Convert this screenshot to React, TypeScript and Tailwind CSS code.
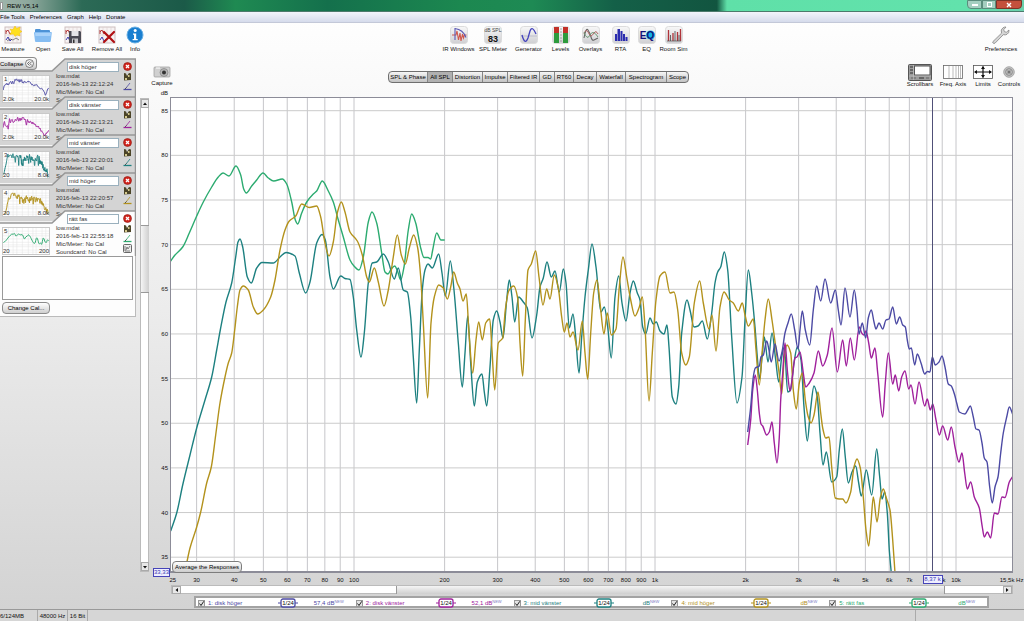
import type { ReactNode } from "react"

type Trace = {
  id: number
  name: string
  date: string
  color: string
  textClass: string
  value: string
  from: string
  to: string
  thumb: string
  points: string
}

const traces: Trace[] = [
  {
    id: 1,
    name: "disk höger",
    date: "2016-feb-13 22:12:24",
    color: "#4c4aa4",
    textClass: "text-[#4c4aa4]",
    value: "57,4 dB",
    from: "2.0k",
    to: "20.0k",
    thumb: "747 240 266 355",
    points:
      "747.7,432 750.7,407 753.3,377 755.3,368 759.3,366 761,357 763.3,355 766.7,341 769,350 771.3,362 775,344 779,361 782,352 785,333 788,323 791.3,314 794.7,330 798,349 800,330 802.3,311 805.3,330 809.7,345 813.3,310 816.7,286 820.7,301 825,279 830.7,303 835.3,290 838.3,310 841,325 845,288 850,317 854.3,290 857,310 859,334 862.3,323 865.7,338 868.3,318 871.3,310 874,322 876,329 879,323 882.7,329 886,320 889,319 892.7,307 896.3,324 899.7,317 902.7,325 905.3,327 907.3,340 909.3,349 911.3,348 914.7,365 917.3,354 921,363 924.7,374 927.3,371.5 930,372 932.3,357 935.3,365 939,362 942,356 945,367 948.3,384 951.3,386 954.7,395 956.7,403 959.3,412 965,414 967.7,410 970.3,406 973.3,417 976,429 979,430 982,443 984.3,458 987,462 989.7,487 992.3,503 995,487 998,477 1000.7,453 1003.3,433 1006.7,417 1009.3,407 1013,415",
  },
  {
    id: 2,
    name: "disk vänster",
    date: "2016-feb-13 22:13:21",
    color: "#a0209c",
    textClass: "text-[#a0209c]",
    value: "52,1 dB",
    from: "2.0k",
    to: "20.0k",
    thumb: "747 290 266 297",
    points:
      "747.7,445 750.7,420 752.7,390 755.3,375 757.3,390 759.3,413 761,424 762.7,426 766.7,435 769.3,432 772,422 774.3,443 777,463 779.3,437 780.7,400 782.7,373 785,343 787.5,372 790,391 792,380 795,358 797,357 800,352 803.3,373 805.7,387 809.3,383 814,373 818.3,351 822.7,366 827.3,355 832,328 837.3,372 842.7,340 846.3,366 850.3,338 854.3,360 859.3,327 861.7,333 864,335 866,331 868.7,343 871.3,358 875,348 877.7,373 882.7,417 885.3,383 888.3,353 892.7,384 895.3,375 898.7,391 901.7,377 905,371 908.7,389 911,385 915,404 919,382 924.7,406 927.3,399 930.3,410 932.7,404 936,420 939.3,435 942.7,426 947.7,440 951.3,427 955,447 959,462 962,453 964.7,473 967.3,489 970.7,482 974.3,497 979.3,508 982.3,527 984.3,537 987.3,532 990.7,538 994.3,513 998,514 1002,497 1005,497.5 1009.3,482 1013,476",
  },
  {
    id: 3,
    name: "mid vänster",
    date: "2016-feb-13 22:20:01",
    color: "#1d8080",
    textClass: "text-[#1d8080]",
    value: "dB",
    from: "20",
    to: "8.0k",
    thumb: "160 210 750 370",
    points:
      "170.7,531 176.7,513 182.7,485 190,455 196.7,428 205,400 211.7,377 216.7,350 220.3,330 226,302 231.7,283 235.7,257 238,242 240,239 242.7,247 247.3,277 251.3,283 256.7,268 262,262.5 273.3,263 280,257 286,252.5 295,256 299.3,273 305.7,293 310,282 316.7,243 322,234.5 325.3,240 330,277 333.3,289 340.7,276 345,278.5 350,279.5 353.3,297 356.7,330 361,357 364.3,333 368.3,283 372.3,263 376.7,262 383.3,254 388.3,262 394.3,279 398.3,268 403.3,290 407.3,292 410.7,317 413.3,357 416.7,403 419.3,350 422.3,290 425,270 428,264 432.3,268 438.7,254 442,273 445.3,296 450.3,261 454,290 458.3,343 462.3,387 465,353 467.7,316 470.7,363 474.3,406 477.3,382 482,374 484.3,392 486.7,406 490,367 493.3,320 496.7,311 500,322 503,338 506.7,300 509.3,280 512,297 514.7,322 518.7,297 523.3,302 527.3,308 532,338 536.7,315 540,287 543.3,278 547,262 551.3,277 555,271 559.3,292 563.3,269 566,283 569.3,328 573,314 575.7,337 579,373 581.7,337 585,297 588.3,270 592,244 596,267 601,312 604.3,307 607.7,327 611.3,358 615,297 618.7,276 622,303 626,321 630,293 633.3,281 637.3,293 640,300 642.7,327 645.7,334 650,318 653.3,324 656.3,322 660,331 664,334 667,325 669,347 672.3,397 676,404 678.7,387 681.7,333 687,300 690,310 694,327 698,326 702.3,321 707.3,339 711.7,313 715,283 717.7,272 720.7,267 724.3,252 727.7,270 731.7,337 737,403 742,377 745,320 748.3,270 751.7,293 755,327 757.3,357 759.5,379 762,358 764.3,337 768,362 772,333 775.7,360 778.7,382 781.7,357 784.3,347 787.7,392 790.5,390 794,363 797.3,347 801,360 804,407 807.3,441 810.5,410 814,386 817.3,397 820,433 823,465 826.3,452 831.7,482 836.7,477 839.3,450 842.3,429 845.3,457 848.3,483 852,472 855.7,466 858.7,483 861.3,496 866.3,470 871.7,495 876.7,449 879.7,477 882,499 884.7,492 887.3,513 889.3,550 891.3,573",
  },
  {
    id: 4,
    name: "mid höger",
    date: "2016-feb-13 22:20:57",
    color: "#b3921c",
    textClass: "text-[#b3921c]",
    value: "dB",
    from: "20",
    to: "8.0k",
    thumb: "150 150 760 460",
    points:
      "184.7,573 190,548 196.7,527 200.7,512 206.7,483 211.3,467 215.7,435 220,403 225,377 228.3,363 231.7,353 234.7,330 237.3,307 240,290 243.3,286 248.3,290 253.3,307 257.7,314 263.3,310 270.7,297 275,280 280,250 285,230 289.3,221 295.7,216 301.7,204 309.3,207.5 316.7,206 320.7,217 325,243 329,256 333.3,242 337.3,213 341.3,202 345,212 350,232 357.3,241 362.3,255 366.7,277 369.3,282 374.3,268 378.3,282 384,306 388.3,290 393.3,257 397.3,235 401.3,255 405.3,264 409.3,248 413.7,235 417.7,248 420.7,277 423.3,323 427.7,398 431,323 434.3,297 438.7,285 443.3,288 447.3,299 450.7,287 453.7,272 457.3,283 460,289 463,301 466.3,294 469,333 472.7,373 476,340 478.7,322 482.3,340 485.7,323 489.7,319 492,350 494.7,390 498.3,343 502.7,338 505.3,310 508.7,291 513.7,286 517.7,298 520,343 522.7,376 525.3,320 528,270 531.3,264 535.7,251 539,277 543,305 546.7,289 550,299 554.3,275 558.3,288 561.7,317 564.3,332 567,323 570,337 573,332 578,350 582.3,321 585,353 587.7,379 590.7,333 593.7,293 597,280 600,303 604,334 607.3,313 611.3,335 616,329 619.3,287 623,257 626.7,277 630.7,300 635,316 639.3,307 642.3,297 645,327 649,401 652.3,353 656,300 660,276 665,272 670,293 674,292 677.7,310 681.7,353 685.7,365 689.3,357 694.3,303 699.7,281 703.3,303 709,329 712,315 716,351 720,307 724,292 729.3,300 733.3,303 738.3,311 742.3,303 745,315 748.3,326 753.3,319 756,350 759.3,385 762.3,350 765,320 768.3,299 772,320 775.7,347 779,372 781.7,394 784.3,357 787,345 790.7,353 793.3,390 796.3,409 799.3,383 802.3,373 805.3,400 808,416 811,423 814,415 818,392 820.7,413 822.7,428 825.7,438 829,437 831.7,467 835.3,498 839.3,499 842.7,499 846,503 850.7,492 854,467 857,459 860.3,468 863.3,497 866,530 868.7,546 871,523 873.3,497 877,522 880.3,498 883.3,489 886,497 890,510 892.7,540 895,573",
  },
  {
    id: 5,
    name: "rätt fas",
    date: "2016-feb-13 22:55:18",
    color: "#2cab70",
    textClass: "text-[#2cab70]",
    value: "dB",
    from: "20",
    to: "200",
    thumb: "168 110 278 270",
    points:
      "170.7,261 175,255 182.7,247 189.3,233 196.7,216 203.3,202 211.7,187 218.3,177 223,173 229,176 236,166 240.7,175 243.7,189 246.3,193 251.7,186 256.7,180 263,173 268.3,178 273.7,181 282.3,179 286.7,184 291.7,202 295.3,220 297.7,224 301.7,213 306.7,202 313.3,194 316.7,191 322.3,181 328.3,191 333.3,202 338.3,220 343.3,237 350,260 354,266 359,270 363.3,257 368.3,222 372,212 376.7,223 381.7,253 385,272 388,274 390.7,270 394.7,266 397.5,271 400.7,280 404,267 408.3,230 411.7,214 415.7,223 420.7,248 424,257.5 428,257.5 430.7,259 432.7,250 436.7,233 441,240 444.7,240",
  },
]

// plot area in drawing units
const PLOT = { left: 170, top: 97, width: 843, height: 476 }

const freqX = (f: number) => 354 + 301 * Math.log10(f / 100)
const dbY = (db: number) => 110.7 + (85 - db) * 8.93

const gridFreqs = [
  30, 40, 50, 60, 70, 80, 90, 100, 200, 300, 400, 500, 600, 700, 800, 900, 1000, 2000, 3000, 4000, 5000, 6000, 7000,
  8000, 9000, 10000,
]
const gridDbs = [85, 80, 75, 70, 65, 60, 55, 50, 45, 40, 35]

const freqLabels: [number, string][] = [
  [25, "25"], [30, "30"], [40, "40"], [50, "50"], [60, "60"], [70, "70"], [80, "80"], [90, "90"], [100, "100"],
  [200, "200"], [300, "300"], [400, "400"], [500, "500"], [600, "600"], [700, "700"], [800, "800"], [900, "900"],
  [1000, "1k"], [2000, "2k"], [3000, "3k"], [4000, "4k"], [5000, "5k"], [6000, "6k"], [7000, "7k"], [9000, "9k"],
  [10000, "10k"], [15300, "15,5k Hz"],
]

const leftPct = (x: number) => `${((x - PLOT.left) / PLOT.width) * 100}%`
const topPct = (y: number) => `${((y - PLOT.top) / PLOT.height) * 100}%`

// monotone cubic through the points, flat at every peak and dip
function smoothPath(points: string) {
  const p = points.split(" ").map((s) => s.split(",").map(Number))
  const slope = p.slice(1).map((q, i) => (q[1] - p[i][1]) / (q[0] - p[i][0]))
  const tangent = p.map((_, i) => {
    if (i === 0) return slope[0]
    if (i === p.length - 1) return slope[i - 1]
    const a = slope[i - 1]
    const b = slope[i]
    return a * b <= 0 ? 0 : (2 * a * b) / (a + b)
  })
  let d = `M${p[0][0]} ${p[0][1]}`
  for (let i = 1; i < p.length; i++) {
    const h = (p[i][0] - p[i - 1][0]) / 3
    d += `C${p[i - 1][0] + h} ${p[i - 1][1] + tangent[i - 1] * h} ${p[i][0] - h} ${p[i][1] - tangent[i] * h} ${p[i][0]} ${p[i][1]}`
  }
  return d
}

function Tile({ children }: { children?: ReactNode }) {
  return (
    <svg viewBox="0 0 18 18" className="size-[18px]" aria-hidden="true">
      <defs>
        <linearGradient id="tile" x1="0" y1="0" x2="0" y2="1">
          <stop offset="0" stopColor="#f8f8f8" />
          <stop offset="1" stopColor="#cfcfd2" />
        </linearGradient>
      </defs>
      <rect x="0.5" y="0.5" width="17" height="17" rx="3" fill="url(#tile)" stroke="#dcdcdc" />
      {children}
    </svg>
  )
}

function GraphSheet({ children }: { children?: ReactNode }) {
  return (
    <svg viewBox="0 0 18 18" className="size-[18px]" aria-hidden="true">
      <rect x="1" y="1" width="16" height="16" fill="#f7f3f3" stroke="#cdbfc0" />
      <path d="M1 9h16M9 1v16M5 1v16M13 1v16" stroke="#ddd2d2" strokeWidth="0.6" />
      <path d="M2 4v4M2 6l2-2 2 4 1-1" stroke="#b53a3a" fill="none" />
      <path d="M2 14l2-3 2 4 2-2" stroke="#3d3db0" fill="none" />
      {children}
    </svg>
  )
}

const icons: Record<string, ReactNode> = {
  Measure: (
    <GraphSheet>
      <path d="M3 15l3-2 3 1 3-2 3 2" stroke="#555" strokeWidth="0.7" fill="none" />
      <path d="M11 0l1.500 2.500L16 1l-.5 3 2.500 1.500-2.500 1.500L16 10l-3-1-2 1.500L9.500 8 6 8.500 7.500 5.500 6 3l3 .5z" fill="#ffe01e" stroke="#f0b810" strokeWidth="0.5" />
    </GraphSheet>
  ),
  Open: (
    <svg viewBox="0 0 18 18" className="size-[18px]" aria-hidden="true">
      <path d="M1 4q0-1 1-1h4l1 1h8q1 0 1 1v9H1z" fill="#4d92d6" />
      <path d="M0 7q0-1 1-1h16q1 0 .8 1l-1 8q0 1-1 1H2q-1 0-1-1z" fill="#86bdf2" />
      <path d="M1 7h16l-.5 3H1.500z" fill="#a9d2fa" />
    </svg>
  ),
  "Save All": (
    <GraphSheet>
      <path d="M5 5h11l1 1v11H5z" fill="#4b4b55" />
      <path d="M7.500 5h7v5h-7z" fill="#e6e6ea" />
      <path d="M8 12.500h6V17H8z" fill="#c8c8cd" />
      <path d="M9 13.500h1.500V17H9z" fill="#333" />
    </GraphSheet>
  ),
  "Remove All": (
    <GraphSheet>
      <path d="M6 6l10 10M16 6L6 16" stroke="#b00f12" strokeWidth="2.200" strokeLinecap="round" />
    </GraphSheet>
  ),
  Info: (
    <svg viewBox="0 0 18 18" className="size-[18px] max-w-none" aria-hidden="true">
      <circle cx="9" cy="9" r="8" fill="#1a7fd0" stroke="#69afe4" />
      <circle cx="9.200" cy="4.600" r="1.500" fill="#fff" />
      <path d="M7 7.500h3.200v5.500h1.500v1.300H6.600V13H8V8.800H7z" fill="#fff" />
    </svg>
  ),
  // impulse burst under a falling window curve
  "IR Windows": (
    <Tile>
      <path d="M2 9h4l1-4 1.500 9L10 7l1 8 1.500-7 1 4 1-3h2" stroke="#d0584e" strokeWidth="1.100" fill="none" />
      <path d="M5 14V2.500q8 1 11 9" stroke="#5958b5" strokeWidth="1.100" fill="none" />
    </Tile>
  ),
  "SPL Meter": (
    <Tile>
      <text x="9" y="6" textAnchor="middle" fontSize="5" fill="#444">dB SPL</text>
      <text x="9" y="15.500" textAnchor="middle" fontSize="9" fontWeight="bold" fill="#111">83</text>
    </Tile>
  ),
  Generator: (
    <Tile>
      <path d="M1 10h16" stroke="#9a9ab5" strokeWidth="0.5" />
      <path d="M2 9q3 11 6 3l2-7q2-6 6 3" stroke="#4342bd" strokeWidth="1.300" fill="none" />
    </Tile>
  ),
  Levels: (
    <Tile>
      <path d="M2 1h5v6H2zM11 1h5v6h-5z" fill="#c23028" />
      <path d="M2 7h5v10H2zM11 7h5v10h-5z" fill="#2d9b3d" />
      <path d="M8 3h2M8 6h2M8 9h2M8 12h2M8 15h2" stroke="#888" strokeWidth="0.7" />
    </Tile>
  ),
  Overlays: (
    <Tile>
      <path d="M2 12q2-11 4-8t3 7 3 3 4-2" stroke="#666" strokeWidth="1.100" fill="none" />
      <path d="M2 8q2-6 4-2t3 4 3-3 4 1" stroke="#b06262" strokeWidth="1" fill="none" />
      <path d="M2 6q3 9 6 3t8 2" stroke="#62926c" strokeWidth="0.9" fill="none" />
    </Tile>
  ),
  RTA: (
    <Tile>
      <path d="M3 15V8h2v7zM5.500 15V3h2.500v12zM8.500 15V5h2v10zM11 15V8h2v7zM13.500 15v-4h2v4z" fill="#2b2cae" />
    </Tile>
  ),
  EQ: (
    <Tile>
      <circle cx="12.500" cy="9" r="4.500" fill="#14b4e4" />
      <text x="9" y="12.500" textAnchor="middle" fontSize="10" fontWeight="bold" fill="#12127a">EQ</text>
    </Tile>
  ),
  "Room Sim": (
    <Tile>
      <path d="M3.500 15V4M8 15V7M12.500 15V6M15.500 15V3" stroke="#b0343a" strokeWidth="1.300" />
      <path d="M5.500 15V9M10 15V5M14 15V9" stroke="#666" strokeWidth="1" />
      <path d="M2 15h14" stroke="#555" strokeWidth="0.7" />
    </Tile>
  ),
  Preferences: (
    <svg viewBox="0 0 18 18" className="size-[18px]" aria-hidden="true">
      <path d="M1 15.500l8.500-8.300Q8.300 3.500 11 1.800q1.500-1 3-.8l-2.300 2.700.7 2 2 .5L17 4q.3 3-2 4.300-1.700 1-3.700.4L3 17.200q-1.200.5-2-.2t0-1.500z" fill="#d6d6d6" stroke="#858585" strokeWidth="0.8" />
    </svg>
  ),
  Capture: (
    <svg viewBox="0 0 18 12" className="h-3 w-[18px]" aria-hidden="true">
      <rect x="1" y="1" width="16" height="10" rx="1" fill="#d0d0d0" stroke="#999" strokeWidth="0.7" />
      <path d="M3 2h4" stroke="#fff" />
      <circle cx="11" cy="6.500" r="4" fill="#b5b5b5" stroke="#777" strokeWidth="0.6" />
      <circle cx="11" cy="6.500" r="2" fill="#333" />
    </svg>
  ),
  Scrollbars: (
    <svg viewBox="0 0 24 17" className="h-[17px] w-6" aria-hidden="true">
      <rect x="0.500" y="0.500" width="23" height="16" rx="1" fill="#9c9c9c" stroke="#555" />
      <rect x="6.500" y="2" width="15.500" height="9" fill="#fff" stroke="#555" />
      <path d="M2 3h3M2 6h3M2 9h3M11 14h5" stroke="#333" strokeWidth="1.200" />
      <path d="M3 14h5M18 14h3" stroke="#666" />
      <path d="M5.500 1v15M1 12h22" stroke="#ccc" strokeWidth="0.500" />
    </svg>
  ),
  "Freq. Axis": (
    <svg viewBox="0 0 20 14" className="h-[14px] w-5" aria-hidden="true">
      <rect x="0.500" y="0.500" width="19" height="13" fill="#fff" stroke="#666" strokeWidth="0.800" />
      <path d="M6 1v12M10 1v12M13 1v12M15.500 1v12M17.500 1v12" stroke="#aaa" strokeWidth="0.800" />
    </svg>
  ),
  Limits: (
    <svg viewBox="0 0 20 14" className="h-[14px] w-5" aria-hidden="true">
      <rect x="0.500" y="0.500" width="19" height="13" fill="#fff" stroke="#555" strokeWidth="0.800" />
      <path d="M2 7h16M10 1.500v11" stroke="#111" strokeWidth="1.200" />
      <path d="M1 7l3-2v4zM19 7l-3-2v4zM10 1L8 4h4zM10 13l-2-3h4z" fill="#111" />
    </svg>
  ),
  Controls: (
    <svg viewBox="0 0 12 14" className="h-[14px] w-3" aria-hidden="true">
      <circle cx="6" cy="7" r="5.300" fill="#c4c4c4" stroke="#9a9a9a" strokeWidth="0.800" />
      <circle cx="6" cy="7" r="3.500" fill="#a9a9a9" stroke="#8a8a8a" strokeWidth="0.700" />
      <path d="M6 4v6M3 7h6" stroke="#ddd" strokeWidth="0.600" />
      <circle cx="6" cy="7" r="1.500" fill="#777" />
    </svg>
  ),
}

function ToolButton({ label, width }: { label: string; width: string }) {
  return (
    <button className={`flex flex-col items-center justify-end gap-px ${width}`}>
      {icons[label]}
      <span className="leading-[9px] whitespace-nowrap">{label}</span>
    </button>
  )
}

const fileTools = [
  ["Measure", "w-[26px]"],
  ["Open", "w-[34px]"],
  ["Save All", "w-[25px]"],
  ["Remove All", "w-[44px]"],
  ["Info", "w-3"],
]

const measureTools = [
  ["IR Windows", "w-[34px]"],
  ["SPL Meter", "w-[35px]"],
  ["Generator", "w-[36px]"],
  ["Levels", "w-[28px]"],
  ["Overlays", "w-[32px]"],
  ["RTA", "w-[28px]"],
  ["EQ", "w-[24px]"],
  ["Room Sim", "w-[30px]"],
]

const graphTools = [
  ["Scrollbars", "w-[32px]"],
  ["Freq. Axis", "w-[34px]"],
  ["Limits", "w-[26px]"],
  ["Controls", "w-[26px]"],
]

const tabs = [
  ["SPL & Phase", "w-[39px]"],
  ["All SPL", "w-[25px]"],
  ["Distortion", "w-[30px]"],
  ["Impulse", "w-[25px]"],
  ["Filtered IR", "w-[32px]"],
  ["GD", "w-[15px]"],
  ["RT60", "w-[19px]"],
  ["Decay", "w-[23px]"],
  ["Waterfall", "w-[29px]"],
  ["Spectrogram", "w-[41px]"],
  ["Scope", "w-[21px]"],
]

function TitleBar() {
  return (
    <header className="flex h-3 shrink-0 items-center justify-between border-b border-[#4d7a6c] bg-[linear-gradient(90deg,#9fb5ab_0%,#8ca79b_3%,#2c6a56_8%,#1b5a48_18%,#1f8a52_23%,#14704c_32%,#1c8850_45%,#1e8a54_52%,#146048_60%,#125540_70%,#5fe0a8_71%,#62e2ac_94%,#6ad0ac_100%)]">
      <h1 className="flex items-center gap-1 text-black">
        <span className="h-2 w-[3px] border border-[#999] bg-white" />
        REW V5,14
      </h1>
      <div className="flex h-full items-start">
        <button aria-label="Minimize" className="flex h-[9px] w-[15px] items-center justify-center rounded-bl-sm border border-[#5a8c7c] bg-[#a4cfc0]">
          <span className="h-[2px] w-[6px] bg-white" />
        </button>
        <button aria-label="Maximize" className="flex h-[9px] w-[14px] items-center justify-center border border-[#5a8c7c] bg-[#a4cfc0]">
          <span className="size-[5px] border border-white" />
        </button>
        <button aria-label="Close" className="mr-[2px] flex h-[9px] w-[26px] items-center justify-center rounded-br-sm border border-[#7c3328] bg-[#c4503c]">
          <svg viewBox="0 0 6 6" className="size-[6px]">
            <path d="M1 1l4 4M5 1L1 5" stroke="#fff" strokeWidth="1.400" />
          </svg>
        </button>
      </div>
    </header>
  )
}

function MenuBar() {
  return (
    <nav className="flex h-[11px] shrink-0 items-center border-b border-[#c3c8d8] bg-linear-to-b from-[#f2f5fb] to-[#d5dbeb] text-black">
      <button className="mr-px">File</button>
      <div className="flex gap-[5px]">
        {["Tools", "Preferences", "Graph", "Help", "Donate"].map((m) => (
          <button key={m}>{m}</button>
        ))}
      </div>
    </nav>
  )
}

function Thumbnail({ trace }: { trace: Trace }) {
  const [x, y, w, h] = trace.thumb.split(" ").map(Number)
  const lines = [0.12, 0.22, 0.3, 0.42, 0.55, 0.65, 0.72, 0.85, 0.93]
  return (
    <div className="relative h-7 w-12 border border-[#c9c9c9] bg-white text-[#333]">
      <svg viewBox={trace.thumb} preserveAspectRatio="none" className="block size-full">
        {lines.map((l) => (
          <path key={l} d={`M${x + l * w} ${y}v${h}M${x} ${y + l * h}h${w}`} stroke="#e2e2e2" strokeWidth="0.5" vectorEffect="non-scaling-stroke" />
        ))}
        <path d={smoothPath(trace.points)} fill="none" stroke={trace.color} vectorEffect="non-scaling-stroke" />
      </svg>
      <span className="absolute top-0 left-px leading-[6px]">{trace.id}</span>
      <span className="absolute bottom-0 left-0 leading-[6px]">{trace.from}</span>
      <span className="absolute right-0 bottom-0 leading-[6px]">{trace.to}</span>
    </div>
  )
}

function MeasurementCard({ trace, active }: { trace: Trace; active: boolean }) {
  return (
    <article className="relative -mb-3 h-[50px]">
      <svg viewBox="0 0 136 50" className="absolute inset-0 h-[50px] w-[136px]" aria-hidden="true">
        <path d="M0 14H52L65 2H135.500V50H0z" fill={active ? "#fdfdfd" : "#d4d4d4"} />
        <path d="M0 14H52L65 2H135.500V50" fill="none" stroke="#969696" strokeWidth="1.500" />
      </svg>
      <div className="relative grid h-full grid-cols-[56px_1fr_18px]">
        <div className="pt-[18px] pl-[2px]">
          <Thumbnail trace={trace} />
        </div>
        <div className="min-w-0 pt-[5px] leading-[8px] whitespace-nowrap text-[#333]">
          <input
            aria-label={`Name of measurement ${trace.id}`}
            defaultValue={trace.name}
            className="ml-[11px] block h-[10px] w-[52px] border border-[#9ab0bd] bg-white px-px leading-[8px] text-[#333]"
          />
          <p>low.mdat</p>
          <p>{trace.date}</p>
          <p>Mic/Meter: No Cal</p>
          <p>Soundcard: No Cal</p>
        </div>
        <div className="flex flex-col items-center gap-px pt-[5px]">
          <button aria-label="Remove measurement">
            <svg viewBox="0 0 9 9" className="block size-[9px]">
              <circle cx="4.500" cy="4.500" r="4" fill="#d0241c" stroke="#8d1712" strokeWidth="0.600" />
              <path d="M3 3l3 3M6 3L3 6" stroke="#fff" strokeWidth="1.300" />
            </svg>
          </button>
          <button aria-label="Save measurement">
            <svg viewBox="0 0 9 9" className="block size-[9px]">
              <path d="M1 1l2 .5L4 4l2-3 2 .5V8L1 8.500z" fill="#4b4427" />
              <path d="M2 6h2v2H2zM5 3h1.500v2H5z" fill="#d5c98b" />
            </svg>
          </button>
          <button aria-label="Trace colour">
            <svg viewBox="0 0 9 9" className="block size-[9px]">
              <path d="M0.500 7.500h8" stroke={trace.color} strokeWidth="1.300" />
              <path d="M3 6l4-5" stroke={trace.color} strokeWidth="0.800" />
              <path d="M2 7l1.500-1.500" stroke="#555" />
            </svg>
          </button>
          {active && (
            <button aria-label="Notes">
              <svg viewBox="0 0 9 9" className="block size-[9px]">
                <rect x="0.500" y="0.500" width="8" height="8" rx="1" fill="#eee" stroke="#444" strokeWidth="0.800" />
                <path d="M2 2v5h5M3 6l1-3 1 2 2-3" stroke="#555" strokeWidth="0.700" fill="none" />
              </svg>
            </button>
          )}
        </div>
      </div>
    </article>
  )
}

function Sidebar() {
  return (
    <aside className="w-[136px] shrink-0">
      <button className="relative z-10 flex h-[13px] w-[37px] items-center justify-between rounded-r-sm border border-l-0 border-[#8b8b8b] bg-linear-to-b from-white to-[#c9c9c9] pr-[2px] text-black">
        Collapse
        <svg viewBox="0 0 9 9" className="size-[9px]">
          <circle cx="4.500" cy="4.500" r="4" fill="#eee" stroke="#555" strokeWidth="0.700" />
          <path d="M4.500 2.500l-2 2 2 2M6.800 2.500l-2 2 2 2" stroke="#333" strokeWidth="0.700" fill="none" />
        </svg>
      </button>
      <div className="-mt-[13px]">
        {traces.map((t) => (
          <MeasurementCard key={t.id} trace={t} active={t.id === 5} />
        ))}
      </div>
      <div className="relative mt-[9px] border-r border-b border-[#bbb] bg-[#fdfdfd] px-[2px] pb-[2px]">
        <textarea aria-label="Notes" className="block h-11 w-full resize-none border border-[#999] bg-white" />
        <button className="mt-[2px] block h-3 w-[48px] rounded-sm border border-[#8b8b8b] bg-linear-to-b from-white to-[#cfcfcf] text-black">
          Change Cal...
        </button>
      </div>
    </aside>
  )
}

function Arrow({ d }: { d: string }) {
  return (
    <button className="flex items-center justify-center border border-[#aaa] bg-[#e8e8e8]">
      <svg viewBox="0 0 6 6" className="size-[6px]">
        <path d={d} fill="#111" />
      </svg>
    </button>
  )
}

function Plot() {
  return (
    <div className="relative min-h-[300px] min-w-0 flex-1">
      <svg viewBox="170 97 843 476" preserveAspectRatio="none" className="absolute inset-0 size-full bg-white" role="img" aria-label="SPL against frequency">
        {gridFreqs.map((f) => (
          <path key={f} d={`M${freqX(f)} 97v476`} stroke="#c6c6ca" vectorEffect="non-scaling-stroke" />
        ))}
        {gridDbs.map((db) => (
          <path key={db} d={`M170 ${dbY(db)}h843`} stroke="#cbcbcb" vectorEffect="non-scaling-stroke" />
        ))}
        {[5, 3, 4, 2, 1].map((id) => (
          <path key={id} d={smoothPath(traces[id - 1].points)} fill="none" stroke={traces[id - 1].color} strokeWidth="1.400" vectorEffect="non-scaling-stroke" />
        ))}
        <path d="M932.500 97v476" stroke="#505078" vectorEffect="non-scaling-stroke" />
      </svg>
      <div className="absolute inset-0 border border-b-2 border-[#8c8c98]" />
      <button className="absolute bottom-0 left-[2px] h-3 w-[70px] rounded-sm border border-[#7d7d7d] bg-linear-to-b from-white to-[#cdcdcd] whitespace-nowrap text-black">
        Average the Responses
      </button>
    </div>
  )
}

function Legend() {
  return (
    <div className="mt-[2px] mr-[35px] ml-[43px] grid h-3 grid-cols-5 border-2 border-[#a3a3a3] bg-white pl-[2px]">
      {traces.map((t) => (
        <div key={t.id} className={`flex items-center ${t.textClass}`}>
          <label className="relative flex w-[80px] items-center gap-[3px]">
            <input type="checkbox" defaultChecked className="peer size-[7px] appearance-none border border-[#999] bg-[#e4e4e4]" />
            <svg viewBox="0 0 7 7" className="pointer-events-none absolute left-0 hidden size-[7px] peer-checked:block">
              <path d="M1.500 3.500L3 5.500 5.800 1.300" stroke="#222" fill="none" />
            </svg>
            {t.id}: {t.name}
          </label>
          <svg viewBox="0 0 20 10" className="h-[10px] w-5 shrink-0">
            <path d="M0 5h3M17 5h3" stroke={t.color} strokeWidth="1.200" />
            <rect x="3" y="1" width="14" height="8" rx="2" fill="#fff" stroke={t.color} strokeWidth="1.300" />
            <text x="10" y="7" textAnchor="middle" fontSize="6" fill="#111">1/24</text>
          </svg>
          <span className="flex flex-1 justify-end pr-3 whitespace-nowrap">
            {t.value}
            <sup className="top-0 text-[4px] leading-[5px] text-[#7d7cc4]">NEW</sup>
          </span>
        </div>
      ))}
    </div>
  )
}

function GraphPanel() {
  return (
    <main className="ml-[2px] flex min-w-0 flex-1 flex-col">
      <div className="flex h-10 shrink-0 items-start justify-between pr-[2px]">
        <button className="flex w-[22px] flex-col items-center gap-px pt-[9px]">
          {icons.Capture}
          <span className="leading-[9px]">Capture</span>
        </button>
        <div role="tablist" className="mt-[14px] flex h-3 rounded-sm border border-[#6f6f6f] bg-linear-to-b from-[#f6f6f6] to-[#c3c3c3] text-black">
          {tabs.map(([name, width]) => (
            <button
              key={name}
              role="tab"
              aria-selected={name === "All SPL"}
              className={`flex items-center justify-center border-r border-[#858585] whitespace-nowrap last:border-r-0 aria-selected:bg-[#b0b0b0] ${width}`}
            >
              {name}
            </button>
          ))}
        </div>
        <div className="flex h-8 items-stretch">
          {graphTools.map(([name, width]) => (
            <button key={name} className={`flex flex-col items-center justify-between whitespace-nowrap ${width}`}>
              <span className="flex h-[26px] items-center pt-1">{icons[name]}</span>
              <span className="-mt-1 leading-[9px]">{name}</span>
            </button>
          ))}
        </div>
      </div>
      <div className="flex flex-1 pr-[11px]">
        <div className="relative w-[19px] shrink-0">
          <span className="absolute -top-2 right-[2px] leading-[8px]">dB</span>
          {gridDbs.map((db) => (
            <span key={db} className="absolute right-[2px] -mt-1 leading-[8px]" style={{ top: topPct(dbY(db)) }}>
              {db}
            </span>
          ))}
          <span className="absolute right-0 -bottom-1 border border-[#4644b8] bg-[#eeeeff] leading-[7px] text-[#3a38b0]">33,33</span>
        </div>
        <Plot />
      </div>
      <div className="relative mr-[11px] ml-[19px] h-3 shrink-0">
        {freqLabels.map(([f, text]) => (
          <span key={f} className="absolute top-[3px] -translate-x-1/2 leading-[8px] whitespace-nowrap" style={{ left: leftPct(freqX(f)) }}>
            {text}
          </span>
        ))}
        <span className="absolute top-[2px] w-5 -translate-x-1/2 border border-[#4644b8] bg-[#eeeeff] text-center leading-[7px] whitespace-nowrap text-[#3a38b0]" style={{ left: leftPct(932.5) }}>
          8,37 k
        </span>
      </div>
      <div className="mr-[11px] ml-5 grid h-[9px] shrink-0 grid-cols-[9px_216fr_552fr_58fr_9px] border border-[#bbb] bg-white">
        <Arrow d="M4 1v4L1.500 3z" />
        <span />
        <span className="border-x border-[#999] bg-linear-to-b from-[#f5f5f5] to-[#cfcfcf]" />
        <span />
        <Arrow d="M2 1v4l2.500-2z" />
      </div>
      <Legend />
    </main>
  )
}

export default function App() {
  return (
    <div className="flex min-h-screen flex-col overflow-hidden bg-linear-to-b from-white via-[#ececec] to-[#d2d2d2] font-['Liberation_Sans',Arial,sans-serif] text-[6px] leading-[8px] text-[#111]">
      <TitleBar />
      <MenuBar />
      <div className="flex h-[34px] shrink-0 items-start justify-between pt-[3px] pr-[5px]">
        <div className="flex w-[147px]">
          {fileTools.map(([name, width]) => (
            <ToolButton key={name} label={name} width={width} />
          ))}
        </div>
        <div className="flex">
          {measureTools.map(([name, width]) => (
            <ToolButton key={name} label={name} width={width} />
          ))}
        </div>
        <ToolButton label="Preferences" width="w-[36px]" />
      </div>
      <div className="flex flex-1">
        <Sidebar />
        <div className="mt-[41px] mb-9 ml-1 grid w-[9px] grid-rows-[9px_118fr_68fr_271fr_9px] border border-[#bbb] bg-white">
          <Arrow d="M1 4h4L3 1.500z" />
          <span />
          <span className="border-y border-[#999] bg-linear-to-r from-[#f5f5f5] to-[#cfcfcf]" />
          <span />
          <Arrow d="M1 2h4L3 4.500z" />
        </div>
        <GraphPanel />
      </div>
      <footer className="mt-px flex h-3 shrink-0 items-stretch border-t border-[#999] bg-[#d6d6d6]">
        <span className="flex w-[37px] items-center">6/124MB</span>
        <span className="flex w-[30px] items-center justify-center border-l border-[#aaa]">48000 Hz</span>
        <span className="flex w-[21px] items-center justify-center border-x border-[#aaa]">16 Bit</span>
        <span className="flex-1" />
        <span className="w-[109px] border-l border-[#aaa]" />
      </footer>
    </div>
  )
}
